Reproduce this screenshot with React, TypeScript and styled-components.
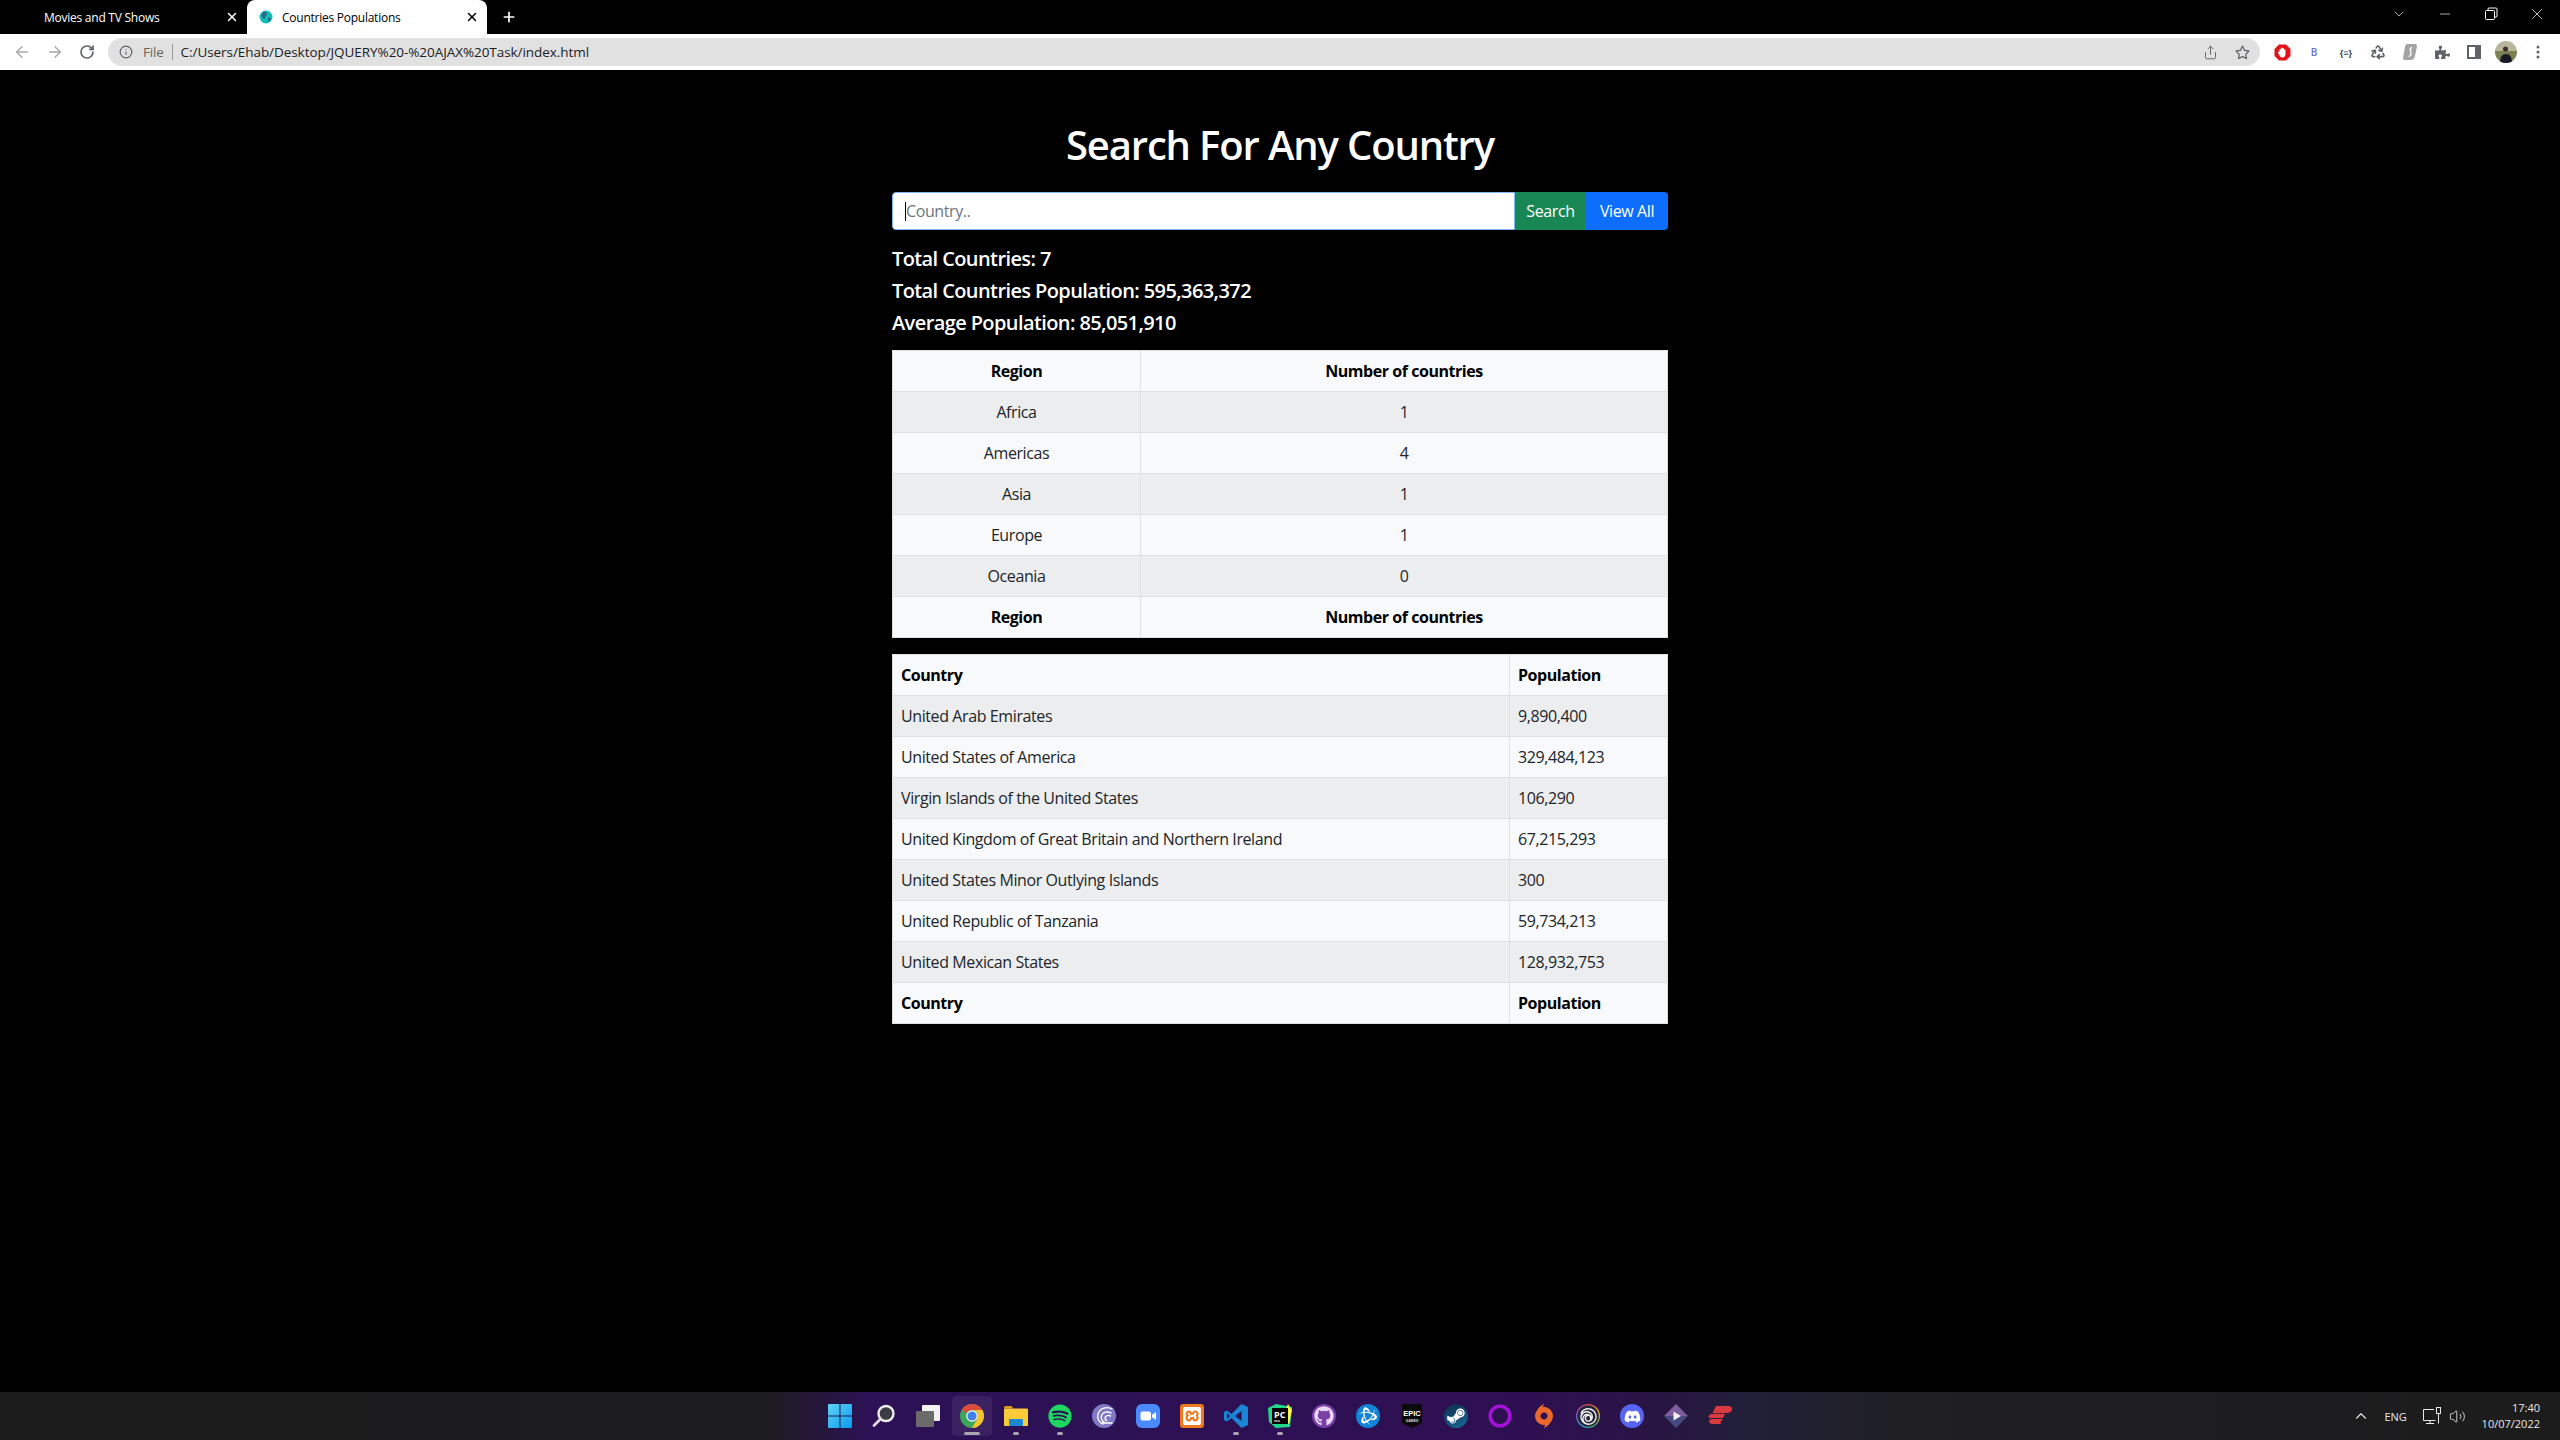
import React from "react";
import styled, { createGlobalStyle } from "styled-components";
import {
  FaSpotify,
  FaGithub,
  FaDiscord,
  FaSteamSymbol,
  FaPuzzlePiece,
  FaRegStar,
} from "react-icons/fa";
import { SiUbisoft, SiOrigin, SiXampp, SiBattledotnet } from "react-icons/si";
import { ArrowLeft, ArrowRight, RotateCw, Info, Share, X, Plus, ChevronDown, Minus, ChevronUp, Volume2, Recycle } from "lucide-react";

const font = `"Open Sans", "Noto Sans", "Liberation Sans", sans-serif`;

const GlobalStyle = createGlobalStyle`
  * { box-sizing: border-box; }
  html, body { margin: 0; padding: 0; background: #000; }
  body { font-family: ${font}; }
`;

const regions = [
  ["Africa", "1"],
  ["Americas", "4"],
  ["Asia", "1"],
  ["Europe", "1"],
  ["Oceania", "0"],
];

const countries = [
  ["United Arab Emirates", "9,890,400"],
  ["United States of America", "329,484,123"],
  ["Virgin Islands of the United States", "106,290"],
  ["United Kingdom of Great Britain and Northern Ireland", "67,215,293"],
  ["United States Minor Outlying Islands", "300"],
  ["United Republic of Tanzania", "59,734,213"],
  ["United Mexican States", "128,932,753"],
];

const App: React.FC = () => {
  return (
    <Screen>
      <GlobalStyle />
      <TabStrip>
        <Tab>
          <TabTitle>Movies and TV Shows</TabTitle>
          <X size={14} strokeWidth={2.5} />
        </Tab>
        <Tab active>
          <Favicon />
          <TabTitle>Countries Populations</TabTitle>
          <X size={14} strokeWidth={2.5} />
        </Tab>
        <NewTab>
          <Plus size={16} strokeWidth={2.5} />
        </NewTab>
        <WindowControls>
          <WindowButton><ChevronDown size={16} strokeWidth={1} /></WindowButton>
          <WindowButton><Minus size={16} strokeWidth={1} /></WindowButton>
          <WindowButton><RestoreIcon /></WindowButton>
          <WindowButton><X size={18} strokeWidth={1} /></WindowButton>
        </WindowControls>
      </TabStrip>

      <Toolbar>
        <NavButtons>
          <ArrowLeft size={18} color="#a9a9a9" />
          <ArrowRight size={18} color="#a9a9a9" />
          <RotateCw size={16} color="#5f6368" strokeWidth={2.5} />
        </NavButtons>
        <Omnibox>
          <Info size={14} color="#5f6368" />
          <FileLabel>File</FileLabel>
          <UrlText>C:/Users/Ehab/Desktop/JQUERY%20-%20AJAX%20Task/index.html</UrlText>
          <OmniActions>
            <Share size={15} color="#5f6368" strokeWidth={1.5} />
            <FaRegStar size={15} color="#5f6368" />
          </OmniActions>
        </Omnibox>
        <Extensions>
          <ExtSlot><AdBlock /></ExtSlot>
          <ExtSlot><ExtLetter>B</ExtLetter></ExtSlot>
          <ExtSlot><ExtBraces>{"{≡}"}</ExtBraces></ExtSlot>
          <ExtSlot><Recycle size={16} color="#5f6368" strokeWidth={2.5} /></ExtSlot>
          <ExtSlot><Surfshark /></ExtSlot>
          <ExtSlot><FaPuzzlePiece size={15} color="#5f6368" /></ExtSlot>
          <ExtSlot><SidePanel /></ExtSlot>
          <ExtSlot><Avatar /></ExtSlot>
          <ExtSlot><MenuDots /></ExtSlot>
        </Extensions>
      </Toolbar>

      <Viewport>
        <Container>
          <Heading>Search For Any Country</Heading>
          <SearchForm>
            <InputWrap>
              <SearchInput placeholder="Country.." />
            </InputWrap>
            <ActionButton color="#198754" width={71}>Search</ActionButton>
            <ActionButton color="#0d6efd" width={82} last>View All</ActionButton>
          </SearchForm>
          <Stat>Total Countries: 7</Stat>
          <Stat>Total Countries Population: 595,363,372</Stat>
          <Stat>Average Population: 85,051,910</Stat>

          <DataTable>
            <colgroup>
              <col width={248} />
              <col />
            </colgroup>
            <tbody>
              <Row>
                <HeadCell centered>Region</HeadCell>
                <HeadCell centered>Number of countries</HeadCell>
              </Row>
              {regions.map(([name, count]) => (
                <Row key={name}>
                  <Cell centered>{name}</Cell>
                  <Cell centered>{count}</Cell>
                </Row>
              ))}
              <Row>
                <HeadCell centered>Region</HeadCell>
                <HeadCell centered>Number of countries</HeadCell>
              </Row>
            </tbody>
          </DataTable>

          <DataTable>
            <colgroup>
              <col width={617} />
              <col />
            </colgroup>
            <tbody>
              <Row>
                <HeadCell>Country</HeadCell>
                <HeadCell>Population</HeadCell>
              </Row>
              {countries.map(([name, population]) => (
                <Row key={name}>
                  <Cell>{name}</Cell>
                  <Cell>{population}</Cell>
                </Row>
              ))}
              <Row>
                <HeadCell>Country</HeadCell>
                <HeadCell>Population</HeadCell>
              </Row>
            </tbody>
          </DataTable>
        </Container>
      </Viewport>

      <Taskbar>
        <TaskIcons>
          <TaskSlot><WindowsLogo /></TaskSlot>
          <TaskSlot><SearchLogo /></TaskSlot>
          <TaskSlot><TaskView /></TaskSlot>
          <TaskSlot active running><ChromeLogo /></TaskSlot>
          <TaskSlot running><FolderLogo /></TaskSlot>
          <TaskSlot running><FaSpotify size={24} color="#1ed760" /></TaskSlot>
          <TaskSlot><TorrentLogo /></TaskSlot>
          <TaskSlot><ZoomLogo /></TaskSlot>
          <TaskSlot><XamppTile><SiXampp size={18} color="#fff" /></XamppTile></TaskSlot>
          <TaskSlot running><VsCodeLogo /></TaskSlot>
          <TaskSlot running><PyCharmLogo /></TaskSlot>
          <TaskSlot><RoundTile color="#7b3fa8"><FaGithub size={20} color="#e9d8f5" /></RoundTile></TaskSlot>
          <TaskSlot><RoundTile color="#1184d8"><SiBattledotnet size={18} color="#fff" /></RoundTile></TaskSlot>
          <TaskSlot><EpicLogo /></TaskSlot>
          <TaskSlot><SteamTile><FaSteamSymbol size={20} color="#fff" /></SteamTile></TaskSlot>
          <TaskSlot><PurpleRing /></TaskSlot>
          <TaskSlot><SiOrigin size={24} color="#e96a2c" /></TaskSlot>
          <TaskSlot><UbiTile><SiUbisoft size={17} color="#eee" /></UbiTile></TaskSlot>
          <TaskSlot><RoundTile color="#5865f2"><FaDiscord size={17} color="#fff" /></RoundTile></TaskSlot>
          <TaskSlot><DiamondLogo /></TaskSlot>
          <TaskSlot><ExpressLogo /></TaskSlot>
        </TaskIcons>
        <Tray>
          <TraySlot width={26}><ChevronUp size={18} color="#e8e8e8" strokeWidth={1.5} /></TraySlot>
          <TraySlot width={44}><TrayLang>ENG</TrayLang></TraySlot>
          <TraySlot width={28}><NetworkIcon /></TraySlot>
          <TraySlot width={24}><Volume2 size={17} color="#e8e8e8" strokeWidth={1.2} /></TraySlot>
          <Clock>
            <span>17:40</span>
            <span>10/07/2022</span>
          </Clock>
        </Tray>
      </Taskbar>
    </Screen>
  );
};

// Drawings ----------------------------------

const RestoreIcon = () => (
  <svg width="16" height="16" viewBox="0 0 16 16" fill="none" stroke="#fff" strokeWidth="1">
    <rect x="2.5" y="4.5" width="9" height="9" rx="1" />
    <path d="M5 4.5V3a1 1 0 0 1 1-1h7a1 1 0 0 1 1 1v7a1 1 0 0 1-1 1h-1.5" />
  </svg>
);

const Favicon = () => (
  <svg width="14" height="14" viewBox="0 0 14 14">
    <circle cx="7" cy="7" r="6.5" fill="#10c0b8" />
    <path d="M4 2c2-1 4 0 4 2S6 6 6 8s-2 1-3-1 0-4 1-5z" fill="#2b6d8c" />
    <path d="M9 8c1-1 3 0 3 1s-2 3-3 2 0-2 0-3z" fill="#2b6d8c" />
  </svg>
);

const AdBlock = () => (
  <svg width="17" height="17" viewBox="0 0 17 17">
    <path d="M5 .5h7L16.500 5v7L12 16.500H5L.5 12V5z" fill="#e2111a" />
    <path d="M5.500 8V5.200a.8.8 0 0 1 1.500 0V4a.8.8 0 0 1 1.500 0v.5a.8.8 0 0 1 1.500 0v1.200a.8.8 0 0 1 1.500 0V10c0 2-1.200 3.500-3 3.500-1.500 0-2.300-.8-3-2L4 9c-.4-.9.800-1.500 1.500-1z" fill="#fff" />
  </svg>
);

const Surfshark = () => (
  <svg width="14" height="16" viewBox="0 0 14 16">
    <path d="M4 0h8c1.500 0 2 1 2 2l-2 10c-.3 2-2 4-4 4H2c-1.500 0-2-1-2-2L2 3c.2-1.500 1-3 2-3z" fill="#a3a3a3" />
    <path d="M9.500 3C7 3 6 5 7 7c.8 1.500.5 4-2 6 3 0 4-2.500 3.500-4.500C8 6.500 8 4.500 9.500 3z" fill="#fff" />
  </svg>
);

const SidePanel = () => (
  <svg width="14" height="14" viewBox="0 0 14 14">
    <rect width="14" height="14" fill="#5f6368" />
    <rect x="2" y="2" width="6" height="10" fill="#fff" />
  </svg>
);

const Avatar = () => (
  <svg width="22" height="22" viewBox="0 0 22 22">
    <defs>
      <clipPath id="avatarClip">
        <circle cx="11" cy="11" r="11" />
      </clipPath>
    </defs>
    <g clipPath="url(#avatarClip)">
      <rect width="22" height="11" fill="#b9b59a" />
      <rect y="10" width="22" height="12" fill="#7b8150" />
      <path d="M5 22c0-6 2-9 6-9s6 3 6 9z" fill="#161a26" />
      <circle cx="10.500" cy="8" r="2.500" fill="#3d2f26" />
    </g>
  </svg>
);

const MenuDots = () => (
  <svg width="4" height="14" viewBox="0 0 4 14" fill="#5f6368">
    <circle cx="2" cy="2" r="1.500" />
    <circle cx="2" cy="7" r="1.500" />
    <circle cx="2" cy="12" r="1.500" />
  </svg>
);

const WindowsLogo = () => (
  <svg width="24" height="24" viewBox="0 0 24 24">
    <defs>
      <linearGradient id="winGrad" x1="0" y1="0" x2="1" y2="1">
        <stop offset="0" stopColor="#5fd3f5" />
        <stop offset="1" stopColor="#0a9bef" />
      </linearGradient>
    </defs>
    <path d="M0 1a1 1 0 0 1 1-1h10.500v11.500H0zM12.500 0H23a1 1 0 0 1 1 1v10.500H12.500zM0 12.500h11.500V24H1a1 1 0 0 1-1-1zM12.500 12.500H24V23a1 1 0 0 1-1 1H12.500z" fill="url(#winGrad)" />
  </svg>
);

const SearchLogo = () => (
  <svg width="24" height="24" viewBox="0 0 24 24" fill="none">
    <circle cx="14" cy="9.500" r="7.500" fill="#3c3a42" stroke="#eee" strokeWidth="2.400" />
    <path d="M8.500 15L2 21.500" stroke="#ddd" strokeWidth="2.800" strokeLinecap="round" />
  </svg>
);

const TaskView = () => (
  <svg width="24" height="22" viewBox="0 0 24 22">
    <rect x="6" y="0" width="18" height="16" rx="1" fill="#f2f2f2" />
    <rect x="0" y="6" width="18" height="16" rx="1" fill="#6b6b6b" />
  </svg>
);

const ChromeLogo = () => (
  <svg width="24" height="24" viewBox="0 0 24 24">
    <circle cx="12" cy="12" r="12" fill="#3ba55a" />
    <path d="M1.600 6A12 12 0 0 1 22.390 6H12A6 6 0 0 0 6.800 9z" fill="#dd4b3c" />
    <path d="M22.390 6A12 12 0 0 1 12 24l5.200-9A6 6 0 0 0 12 6z" fill="#f6c42e" />
    <circle cx="12" cy="12" r="5.800" fill="#fff" />
    <circle cx="12" cy="12" r="4.600" fill="#3f80ea" />
  </svg>
);

const FolderLogo = () => (
  <svg width="24" height="20" viewBox="0 0 24 20">
    <path d="M0 1.500A1.500 1.500 0 0 1 1.500 0h6l2 2.500H0z" fill="#d99a12" />
    <rect y="2.500" width="24" height="17.500" rx="1" fill="#fbcb3a" />
    <rect x="5" y="13" width="14" height="7" rx="1" fill="#1b88d6" />
  </svg>
);

const TorrentLogo = () => (
  <svg width="24" height="24" viewBox="0 0 24 24" fill="none">
    <circle cx="12" cy="12" r="12" fill="#7f78c4" />
    <path d="M20 5c-5-3-12-1-14 5-1 4 1 8 5 10M19 9c-4-2-8-1-9.500 2.500C8.500 14 10 17 12 18M10 19h10M18.500 12c-2-1-4-.5-5 1s0 3 1 3.500" stroke="#fff" strokeWidth="1.400" strokeLinecap="round" />
  </svg>
);

const ZoomLogo = () => (
  <svg width="24" height="24" viewBox="0 0 24 24">
    <rect width="24" height="24" rx="6" fill="#4a8cff" />
    <rect x="4.500" y="7.500" width="10.500" height="9" rx="2" fill="#fff" />
    <path d="M16 11l4-3v8l-4-3z" fill="#fff" />
  </svg>
);

const VsCodeLogo = () => (
  <svg width="24" height="24" viewBox="0 0 24 24">
    <path d="M17.500 0L24 3v18l-6.500 3L7.500 14l-4.500 3.500L0 16V8l3-1.500L7.500 10zM17.500 7L11 12l6.500 5zM3 9v6l3-3z" fill="#1a87d6" />
  </svg>
);

const PyCharmLogo = () => (
  <svg width="24" height="24" viewBox="0 0 24 24">
    <path d="M0 4L8 0l16 3-2 20-14 1-7-6z" fill="#21d789" />
    <path d="M20 0l4 6-3 14-7-6z" fill="#fcf84a" />
    <rect x="4" y="4" width="16" height="16" fill="#000" />
    <text x="6" y="14" fill="#fff" fontSize="9" fontWeight="700" fontFamily="Open Sans">PC</text>
    <rect x="6" y="16.500" width="6" height="1" fill="#fff" />
  </svg>
);

const EpicLogo = () => (
  <svg width="20" height="24" viewBox="0 0 20 24">
    <path d="M1 0h18a1 1 0 0 1 1 1v18l-10 5L0 19V1a1 1 0 0 1 1-1z" fill="#0b0b0b" />
    <text x="10" y="11.500" fill="#fff" fontSize="7.500" fontWeight="700" fontFamily="Liberation Sans" textAnchor="middle">EPIC</text>
    <text x="10" y="17.500" fill="#ddd" fontSize="3.400" fontWeight="700" fontFamily="Liberation Sans" textAnchor="middle">GAMES</text>
  </svg>
);

const PurpleRing = () => (
  <svg width="24" height="24" viewBox="0 0 24 24" fill="none">
    <circle cx="12" cy="12" r="9.800" stroke="#a412d8" strokeWidth="3.600" />
  </svg>
);

const DiamondLogo = () => (
  <svg width="24" height="24" viewBox="0 0 24 24">
    <path d="M12 0l12 12H0z" fill="#7d5d9b" />
    <path d="M0 12h24L12 24z" fill="#46497f" />
    <path d="M9.500 7.500L17 12l-7.500 4.500z" fill="#f2f2f2" />
  </svg>
);

const ExpressLogo = () => (
  <svg width="24" height="20" viewBox="0 0 24 20" fill="#da3940">
    <path d="M8 0h12.500c3.500 0 4.500 3 2.500 5.500-1 1-3 1.500-5 1.500H5.500c-.8 0-.8-.8-.3-1.300z" />
    <path d="M3.500 7.800H17L15 12H2.500C0 12-.5 9.500 3.500 7.800z" />
    <path d="M2.500 13H15l-2 2.500c-.8 1-.8 2 .5 2.500H4.500c-3.500 0-4-3-2-5z" />
  </svg>
);

const NetworkIcon = () => (
  <svg width="20" height="20" viewBox="0 0 20 20" fill="none" stroke="#e8e8e8" strokeWidth="1">
    <path d="M12 3.500H1.500v11h12" />
    <path d="M4 17.500h8M8 14.500v3" />
    <rect x="14.500" y="1.500" width="4" height="6" />
    <path d="M16.500 7.500v10" />
  </svg>
);

// Styles ------------------------------------

const Screen = styled.div`
  width: 2560px;
  height: 1440px;
  display: flex;
  flex-direction: column;
  overflow: hidden;
  background: #000;
`;

const TabStrip = styled.div`
  height: 34px;
  display: flex;
  align-items: stretch;
  padding-left: 7px;
  background: #000;
`;

const Tab = styled.div<{ active?: boolean }>`
  width: 240px;
  display: flex;
  align-items: center;
  gap: 9px;
  padding: 0 8px 0 ${p => (p.active ? "12px" : "37px")};
  border-radius: 8px 8px 0 0;
  background: ${p => (p.active ? "#fff" : "transparent")};
  color: ${p => (p.active ? "#000" : "#fff")};
  font-size: 12px;
  svg {
    flex: none;
  }
`;

const TabTitle = styled.span`
  flex: 1;
  white-space: nowrap;
  letter-spacing: -0.25px;
`;

const NewTab = styled.div`
  width: 44px;
  display: flex;
  align-items: center;
  justify-content: center;
  color: #fff;
`;

const WindowControls = styled.div`
  margin-left: auto;
  display: flex;
  align-items: center;
  padding-bottom: 6px;
  color: #fff;
`;

const WindowButton = styled.div`
  width: 46px;
  display: flex;
  justify-content: center;
`;

const Toolbar = styled.div`
  height: 36px;
  display: flex;
  align-items: center;
  background: #fff;
`;

const NavButtons = styled.div`
  width: 108px;
  padding: 0 13px;
  display: flex;
  align-items: center;
  justify-content: space-between;
`;

const Omnibox = styled.div`
  width: 2152px;
  height: 28px;
  border-radius: 14px;
  background: #e1e1e1;
  display: flex;
  align-items: center;
  padding: 0 10px 0 11px;
  font-size: 13.5px;
`;

const FileLabel = styled.span`
  margin-left: 10px;
  padding-right: 8px;
  border-right: 1px solid #9a9a9a;
  color: #6b6357;
  line-height: 16px;
  letter-spacing: -0.2px;
`;

const UrlText = styled.span`
  margin-left: 8px;
  color: #202124;
  letter-spacing: -0.06px;
`;

const OmniActions = styled.div`
  margin-left: auto;
  display: flex;
  align-items: center;
  gap: 17px;
`;

const Extensions = styled.div`
  flex: 1;
  display: flex;
  align-items: center;
  padding-left: 6px;
`;

const ExtSlot = styled.div`
  width: 32px;
  display: flex;
  align-items: center;
  justify-content: center;
`;

const ExtLetter = styled.span`
  color: #6b6fd0;
  font-size: 10px;
  font-weight: 600;
`;

const ExtBraces = styled.span`
  color: #3c4043;
  font-size: 9px;
  font-weight: 700;
`;

const Viewport = styled.main`
  flex: 1;
  margin-top: 1px;
  background: #000;
`;

const Container = styled.div`
  width: 776px;
  margin: 0 auto;
  padding-top: 50px;
`;

const Heading = styled.h1`
  margin: 0 0 23px;
  color: #fff;
  text-align: center;
  font-size: 40px;
  font-weight: 600;
  line-height: 48px;
  letter-spacing: -1.15px;
`;

const SearchForm = styled.div`
  display: flex;
  height: 38px;
  margin-bottom: 17px;
`;

const InputWrap = styled.div`
  position: relative;
  flex: 1;

  &::before {
    content: "";
    position: absolute;
    left: 13px;
    top: 10px;
    width: 1px;
    height: 19px;
    background: #000;
  }
`;

const SearchInput = styled.input`
  width: 100%;
  height: 100%;
  padding: 6px 13px;
  border: 1px solid #86b7fe;
  border-radius: 4px 0 0 4px;
  background: #fff;
  outline: none;
  font-family: ${font};
  font-size: 16px;
  letter-spacing: -0.4px;

  &::placeholder {
    color: #6c757d;
    opacity: 1;
  }
`;

const ActionButton = styled.div<{ color: string; width: number; last?: boolean }>`
  width: ${p => p.width}px;
  display: flex;
  align-items: center;
  justify-content: center;
  background: ${p => p.color};
  color: #fff;
  font-size: 16px;
  letter-spacing: -0.4px;
  border-radius: ${p => (p.last ? "0 4px 4px 0" : "0")};
`;

const Stat = styled.h5`
  margin: 0 0 8px;
  color: #fff;
  font-size: 20px;
  font-weight: 600;
  line-height: 24px;
  letter-spacing: -0.6px;
`;

const DataTable = styled.table`
  width: 776px;
  table-layout: fixed;
  border-collapse: collapse;
  margin: 15px 0 16px;
  font-size: 16px;
  letter-spacing: -0.4px;
  color: #212529;

  & + & {
    margin-top: 0;
  }
`;

const Row = styled.tr`
  background: #f8f9fa;
  height: 41px;
  &:nth-child(even) {
    background: #ecedee;
  }
  &:last-child,
  &:first-child {
    background: #f8f9fa;
  }
`;

const Cell = styled.td<{ centered?: boolean }>`
  padding: 8px;
  border: 1px solid #dfe0e1;
  line-height: 24px;
  text-align: ${p => (p.centered ? "center" : "left")};
`;

const HeadCell = styled(Cell).attrs({ as: "th" })`
  font-weight: 700;
  color: #000;
  letter-spacing: -0.45px;
`;

const Taskbar = styled.footer`
  height: 48px;
  display: flex;
  align-items: center;
  position: relative;
  justify-content: center;
  background: linear-gradient(90deg, #1c1c1c 0%, #1d1c1f 30%, #2c1156 34%, #2e1052 60%, #281542 65%, #22203a 68%, #1f1f24 74%, #1c1c1c 100%);
`;

const TaskIcons = styled.div`
  display: flex;
  align-items: center;
`;

const TaskSlot = styled.div<{ active?: boolean; running?: boolean }>`
  position: relative;
  width: 40px;
  height: 40px;
  margin: 0 2px;
  display: flex;
  align-items: center;
  justify-content: center;
  border-radius: 4px;
  background: ${p => (p.active ? "rgba(255,255,255,0.07)" : "transparent")};

  &::after {
    content: "";
    display: ${p => (p.running ? "block" : "none")};
    position: absolute;
    bottom: 1px;
    left: 50%;
    transform: translateX(-50%);
    width: ${p => (p.active ? "16px" : "6px")};
    height: 3px;
    border-radius: 2px;
    background: #a9a4ae;
  }
`;

const RoundTile = styled.div<{ color: string }>`
  width: 24px;
  height: 24px;
  border-radius: 50%;
  background: ${p => p.color};
  display: flex;
  align-items: center;
  justify-content: center;
`;

const SteamTile = styled(RoundTile).attrs({ color: "#123a5e" })`
  background: linear-gradient(160deg, #0e2a4a, #1a6a9a);
`;

const XamppTile = styled.div`
  width: 24px;
  height: 24px;
  border-radius: 3px;
  background: #f0791f;
  display: flex;
  align-items: center;
  justify-content: center;
`;

const UbiTile = styled(RoundTile).attrs({ color: "#2b2b3a" })`
  background: radial-gradient(circle, #25253a 0 60%, transparent 66%),
    conic-gradient(#e34b4b, #e8b33a, #37b06a, #2f9fd8, #8a4bc8, #e34b4b);
`;

const Tray = styled.div`
  position: absolute;
  right: 20px;
  top: 0;
  height: 48px;
  display: flex;
  align-items: center;
  color: #e8e8e8;
`;

const TraySlot = styled.div<{ width: number }>`
  width: ${p => p.width}px;
  display: flex;
  justify-content: center;
`;

const TrayLang = styled.span`
  font-size: 11px;
  font-weight: 500;
`;

const Clock = styled.div`
  display: flex;
  flex-direction: column;
  align-items: flex-end;
  margin-left: 12px;
  font-size: 11px;
  line-height: 16px;
`;

export default App;
